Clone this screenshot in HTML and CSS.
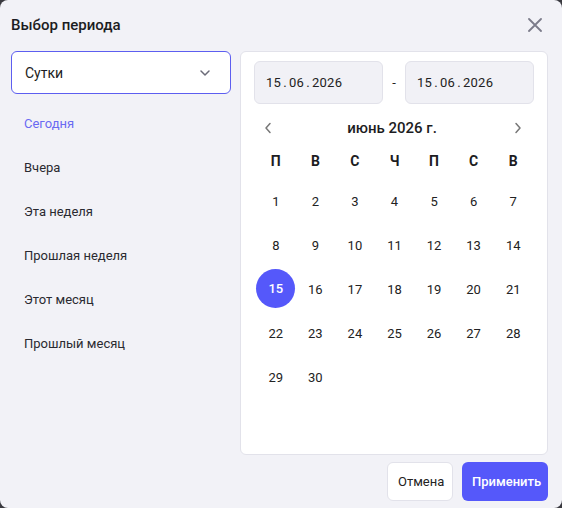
FILE: index.html
```html
<!DOCTYPE html>
<html lang="ru">

<head>
    <meta charset="UTF-8">
    <title>Выбор периода</title>

    <link rel="stylesheet" href="styles.css">
</head>

<body>
    <div class="modal">
        <div class="modal-head">
            <h2>Выбор периода</h2>
            <button class="close">
                <svg width="14" height="14" viewBox="0 0 14 14">
                    <path d="M1 1L13 13M13 1L1 13" stroke="#7b7b8a" stroke-width="1.8" stroke-linecap="round" />
                </svg>
            </button>
        </div>
        <div class="modal-body">
            <div class="side">
                <div class="select">
                    <span>Сутки</span>
                    <svg width="12" height="8" viewBox="0 0 12 8">
                        <path d="M2 2L6 6L10 2" fill="none" stroke="#6b6b78" stroke-width="1.5" stroke-linecap="round" stroke-linejoin="round" />
                    </svg>
                </div>
                <ul class="presets">
                    <li class="active">Сегодня</li>
                    <li>Вчера</li>
                    <li>Эта неделя</li>
                    <li>Прошлая неделя</li>
                    <li>Этот месяц</li>
                    <li>Прошлый месяц</li>
                </ul>
            </div>
            <div class="calendar">
                <div class="range">
                    <div class="date-input">15<span class="sep">.</span>06<span class="sep">.</span>2026</div>
                    <span class="dash">-</span>
                    <div class="date-input">15<span class="sep">.</span>06<span class="sep">.</span>2026</div>
                </div>
                <div class="month-nav">
                    <svg width="8" height="12" viewBox="0 0 8 12">
                        <path d="M6 1.5L2 6L6 10.5" fill="none" stroke="#777" stroke-width="1.5" stroke-linecap="round" stroke-linejoin="round" />
                    </svg>
                    <span>июнь 2026 г.</span>
                    <svg width="8" height="12" viewBox="0 0 8 12">
                        <path d="M2 1.5L6 6L2 10.5" fill="none" stroke="#777" stroke-width="1.5" stroke-linecap="round" stroke-linejoin="round" />
                    </svg>
                </div>
                <div class="weekdays">
                    <span>П</span><span>В</span><span>С</span><span>Ч</span><span>П</span><span>С</span><span>В</span>
                </div>
                <div class="days">
                    <span>1</span><span>2</span><span>3</span><span>4</span><span>5</span><span>6</span><span>7</span>
                    <span>8</span><span>9</span><span>10</span><span>11</span><span>12</span><span>13</span><span>14</span>
                    <span class="selected">15</span><span>16</span><span>17</span><span>18</span><span>19</span><span>20</span><span>21</span>
                    <span>22</span><span>23</span><span>24</span><span>25</span><span>26</span><span>27</span><span>28</span>
                    <span>29</span><span>30</span>
                </div>
            </div>
        </div>
        <div class="modal-foot">
            <button class="btn btn-light">Отмена</button>
            <button class="btn btn-primary">Применить</button>
        </div>
    </div>
</body>

</html>
```

FILE: styles.css
```css
body,
html {
    width: 100%;
    height: 100%;
    margin: 0;
    padding: 0;
    overflow: hidden;
    background: #3a3a40;
}

.modal {
    font-family: Roboto, 'Noto Sans', sans-serif;
    width: 562px;
    height: 508px;
    box-sizing: border-box;
    background: #f2f2f7;
    border-radius: 8px;
    color: #222;
    display: flex;
    flex-direction: column;
}

.modal-head {
    display: flex;
    align-items: center;
    justify-content: space-between;
    height: 51px;
    padding: 0 20px 0 11px;
}

.modal-head h2 {
    margin: 0;
    font-size: 15px;
    font-weight: 500;
    color: #1c1c22;
    position: relative;
    top: -1px;
}

.close {
    border: 0;
    background: none;
    padding: 0;
    display: flex;
    position: relative;
    top: -1px;
}

.modal-body {
    display: flex;
    gap: 9px;
    padding: 0 14px 0 11px;
    height: 404px;
}

.side {
    width: 220px;
}

.select {
    height: 43px;
    box-sizing: border-box;
    background: #fff;
    border: 1px solid #5d5ef0;
    border-radius: 6px;
    display: flex;
    align-items: center;
    justify-content: space-between;
    padding: 0 19px 0 13px;
    font-size: 14px;
    color: #1c1c22;
}

.presets {
    list-style: none;
    margin: 8px 0 0;
    padding: 0;
}

.presets li {
    height: 44px;
    line-height: 44px;
    padding-left: 13px;
    font-size: 13px;
    color: #2a2a30;
}

.presets li.active {
    color: #6a6af2;
}

.calendar {
    flex: 1;
    background: #fff;
    border: 1px solid #e2e2ea;
    border-radius: 6px;
    padding: 9px 13px 0 13px;
}

.range {
    display: flex;
    align-items: center;
}

.date-input {
    width: 129px;
    height: 43px;
    box-sizing: border-box;
    background: #f1f1f6;
    border: 1px solid #e2e2ea;
    border-radius: 6px;
    display: flex;
    align-items: center;
    padding-left: 11px;
    font-size: 13px;
    letter-spacing: 0.3px;
    color: #222;
}

.date-input .sep {
    margin: 0 2px;
}

.dash {
    flex: 1;
    text-align: center;
    font-size: 13px;
}

.month-nav {
    margin-top: 10px;
    height: 28px;
    display: flex;
    align-items: center;
    justify-content: space-between;
    padding: 0 12px 0 10px;
}

.month-nav span {
    font-size: 15px;
    font-weight: 500;
    color: #1c1c22;
    position: relative;
    left: -1px;
}

.weekdays,
.days {
    display: grid;
    grid-template-columns: repeat(7, 1fr);
    padding: 0 1px 0 2px;
}

.weekdays span {
    height: 37px;
    display: flex;
    align-items: center;
    justify-content: center;
    font-size: 14px;
    font-weight: 700;
    color: #1c1c22;
}

.days span {
    height: 44px;
    display: flex;
    align-items: center;
    justify-content: center;
    font-size: 13px;
    color: #222;
}

.days span.selected {
    width: 39px;
    height: 39px;
    margin: 2px auto 3px;
    border-radius: 50%;
    background: #5558fa;
    color: #fff;
    font-weight: 500;
}

.modal-foot {
    display: flex;
    justify-content: flex-end;
    gap: 9px;
    padding: 7px 14px 0 0;
}

.btn {
    font-family: Roboto, 'Noto Sans', sans-serif;
    height: 39px;
    border-radius: 6px;
    font-size: 13px;
    padding: 0 10px;
}

.btn-light {
    background: #fff;
    border: 1px solid #e2e2ea;
    color: #222;
    width: 66px;
}

.btn-primary {
    background: #5558fa;
    border: 0;
    color: #fff;
    font-weight: 500;
    width: 86px;
}
```
